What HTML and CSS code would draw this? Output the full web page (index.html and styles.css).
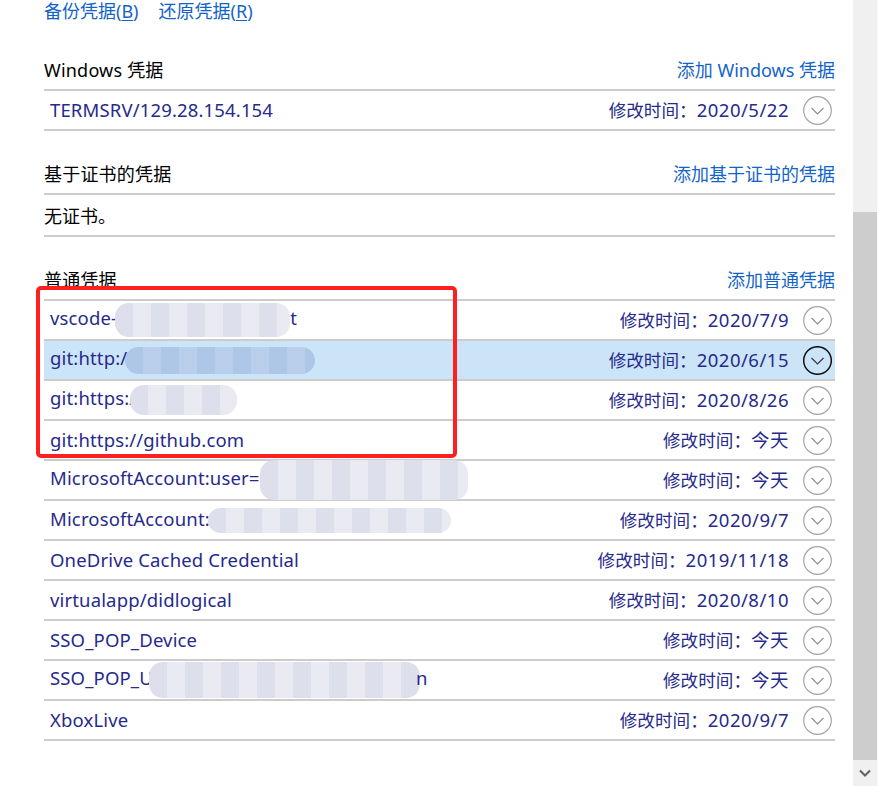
FILE: index.html
```html
<!DOCTYPE html>
<html lang="zh-CN">
<head>
<meta charset="utf-8">
<title>凭据管理器</title>
<link rel="stylesheet" href="styles.css">
</head>
<body>
<div class="window">
  <main class="content">
    <div class="toplinks">
      <a class="link">备份凭据(<u>B</u>)</a>
      <a class="link">还原凭据(<u>R</u>)</a>
    </div>

    <section class="group first">
      <div class="group-head"><span class="title">Windows 凭据</span><a class="link">添加 Windows 凭据</a></div>
      <ul class="list">
        <li class="row"><span class="name">TERMSRV/129.28.154.154</span><span class="time"><span class="label">修改时间：</span><span class="date">2020/5/22</span></span><span class="expand"><svg viewBox="0 0 29 29" width="29" height="29"><circle cx="14.5" cy="14.5" r="13.8"/><polyline points="8.5,12 14.5,18 20.5,12"/></svg></span></li>
      </ul>
    </section>

    <section class="group">
      <div class="group-head"><span class="title">基于证书的凭据</span><a class="link">添加基于证书的凭据</a></div>
      <ul class="list">
        <li class="row empty"><span class="plain">无证书。</span></li>
      </ul>
    </section>

    <section class="group">
      <div class="group-head"><span class="title">普通凭据</span><a class="link">添加普通凭据</a></div>
      <ul class="list">
        <li class="row"><span class="name">vscode-<span class="blur b1"></span>t</span><span class="time"><span class="label">修改时间：</span><span class="date">2020/7/9</span></span><span class="expand"><svg viewBox="0 0 29 29" width="29" height="29"><circle cx="14.5" cy="14.5" r="13.8"/><polyline points="8.5,12 14.5,18 20.5,12"/></svg></span></li>
        <li class="row selected"><span class="name">git:http:/<span class="blur b2"></span></span><span class="time"><span class="label">修改时间：</span><span class="date">2020/6/15</span></span><span class="expand"><svg viewBox="0 0 29 29" width="29" height="29"><circle cx="14.5" cy="14.5" r="13.8"/><polyline points="8.5,12 14.5,18 20.5,12"/></svg></span></li>
        <li class="row"><span class="name">git:https:/<span class="blur b3"></span></span><span class="time"><span class="label">修改时间：</span><span class="date">2020/8/26</span></span><span class="expand"><svg viewBox="0 0 29 29" width="29" height="29"><circle cx="14.5" cy="14.5" r="13.8"/><polyline points="8.5,12 14.5,18 20.5,12"/></svg></span></li>
        <li class="row"><span class="name">git:https://github.com</span><span class="time"><span class="label">修改时间：</span><span class="date">今天</span></span><span class="expand"><svg viewBox="0 0 29 29" width="29" height="29"><circle cx="14.5" cy="14.5" r="13.8"/><polyline points="8.5,12 14.5,18 20.5,12"/></svg></span></li>
        <li class="row"><span class="name">MicrosoftAccount:user=<span class="blur b4"></span></span><span class="time"><span class="label">修改时间：</span><span class="date">今天</span></span><span class="expand"><svg viewBox="0 0 29 29" width="29" height="29"><circle cx="14.5" cy="14.5" r="13.8"/><polyline points="8.5,12 14.5,18 20.5,12"/></svg></span></li>
        <li class="row"><span class="name">MicrosoftAccount:<span class="blur b5"></span></span><span class="time"><span class="label">修改时间：</span><span class="date">2020/9/7</span></span><span class="expand"><svg viewBox="0 0 29 29" width="29" height="29"><circle cx="14.5" cy="14.5" r="13.8"/><polyline points="8.5,12 14.5,18 20.5,12"/></svg></span></li>
        <li class="row"><span class="name">OneDrive Cached Credential</span><span class="time"><span class="label">修改时间：</span><span class="date">2019/11/18</span></span><span class="expand"><svg viewBox="0 0 29 29" width="29" height="29"><circle cx="14.5" cy="14.5" r="13.8"/><polyline points="8.5,12 14.5,18 20.5,12"/></svg></span></li>
        <li class="row"><span class="name">virtualapp/didlogical</span><span class="time"><span class="label">修改时间：</span><span class="date">2020/8/10</span></span><span class="expand"><svg viewBox="0 0 29 29" width="29" height="29"><circle cx="14.5" cy="14.5" r="13.8"/><polyline points="8.5,12 14.5,18 20.5,12"/></svg></span></li>
        <li class="row"><span class="name">SSO_POP_Device</span><span class="time"><span class="label">修改时间：</span><span class="date">今天</span></span><span class="expand"><svg viewBox="0 0 29 29" width="29" height="29"><circle cx="14.5" cy="14.5" r="13.8"/><polyline points="8.5,12 14.5,18 20.5,12"/></svg></span></li>
        <li class="row"><span class="name">SSO_POP_U<span class="blur b6"></span>n</span><span class="time"><span class="label">修改时间：</span><span class="date">今天</span></span><span class="expand"><svg viewBox="0 0 29 29" width="29" height="29"><circle cx="14.5" cy="14.5" r="13.8"/><polyline points="8.5,12 14.5,18 20.5,12"/></svg></span></li>
        <li class="row"><span class="name">XboxLive</span><span class="time"><span class="label">修改时间：</span><span class="date">2020/9/7</span></span><span class="expand"><svg viewBox="0 0 29 29" width="29" height="29"><circle cx="14.5" cy="14.5" r="13.8"/><polyline points="8.5,12 14.5,18 20.5,12"/></svg></span></li>
      </ul>
    </section>

    <div class="mark"></div>
  </main>

  <div class="scrollbar">
    <div class="track"></div>
    <div class="thumb"></div>
    <div class="arrow-down"><svg viewBox="0 0 12 8" width="12" height="8"><polyline points="1,1.5 6,6.5 11,1.5"/></svg></div>
  </div>
</div>
</body>
</html>
```

FILE: styles.css
```css
* { box-sizing: border-box; }

body {
  margin: 0;
  background: #ffffff;
  font-family: "Noto Sans", "Noto Sans CJK SC", sans-serif;
  font-size: 18px;
  color: #000;
}

.window {
  display: flex;
  height: 786px;
  overflow: hidden;
}

.content {
  position: relative;
  flex: 1;
  padding: 0 18px 0 44px;
}

.link {
  color: #1464c8;
  text-decoration: none;
  white-space: nowrap;
}

.link u {
  text-decoration: underline;
  text-underline-offset: 2px;
}

.toplinks {
  display: flex;
  gap: 20px;
  height: 22px;
  line-height: 22px;
}

.group {
  margin-top: 31px;
}

.group.first {
  margin-top: 36px;
}

.title {
  letter-spacing: 0.2px;
}

.group-head {
  display: flex;
  justify-content: space-between;
  align-items: center;
  height: 24px;
  line-height: 24px;
  margin-bottom: 7px;
}

.list {
  list-style: none;
  margin: 0;
  padding: 0;
  border-top: 2px solid #cccccc;
}

.row {
  display: flex;
  align-items: center;
  height: 40px;
  border-bottom: 2px solid #cccccc;
  padding: 0 3px 0 6px;
  color: #262a8c;
}

.row.empty {
  height: 42px;
  padding-left: 0;
  color: #000;
}

.row.selected {
  background: #cce4f7;
}

.name {
  flex: 1;
  white-space: nowrap;
  line-height: 24px;
  font-size: 18.5px;
  letter-spacing: 0.15px;
}

.time {
  white-space: nowrap;
  line-height: 24px;
}

.label {
  font-size: 17.6px;
}

.date {
  font-size: 18.5px;
  letter-spacing: 0.5px;
}

.expand {
  display: flex;
  margin-left: 14px;
}

.expand svg {
  fill: none;
}

.expand circle {
  stroke: #a3a3a3;
  stroke-width: 1.2;
}

.expand polyline {
  stroke: #8c8c8c;
  stroke-width: 1.1;
}

.selected .expand circle {
  stroke: #111;
  stroke-width: 1.5;
}

.selected .expand polyline {
  stroke: #333;
}

.blur {
  display: inline-block;
  vertical-align: middle;
  border-radius: 14px;
  background:
    repeating-linear-gradient(90deg, rgba(218,220,234,0.7) 0 18px, rgba(236,236,243,0.6) 18px 36px),
    #e5e6f0;
}

.b1 { width: 175px; height: 34px; margin-left: -2px; }
.b2 {
  width: 190px; height: 27px; margin-left: -2px;
  background:
    repeating-linear-gradient(90deg, rgba(170,196,230,0.7) 0 18px, rgba(186,207,236,0.7) 18px 36px),
    #b6cdea;
}
.b3 { width: 107px; height: 30px; margin-left: -6px; }
.b4 { width: 208px; height: 40px; margin-left: 0; }
.b5 { width: 243px; height: 25px; margin-left: -2px; }
.b6 { width: 271px; height: 36px; margin-left: -4px; margin-right: -4px; }

.mark {
  position: absolute;
  left: 36px;
  top: 286px;
  width: 421px;
  height: 172px;
  border: 4px solid #fe1f1f;
  border-radius: 5px;
}

.scrollbar {
  width: 25px;
  display: flex;
  flex-direction: column;
  background: #f0f0f0;
  border-right: 1px solid #fafafa;
}

.track {
  height: 212px;
}

.thumb {
  height: 548px;
  background: #cdcdcd;
}

.arrow-down {
  flex: 1;
  display: flex;
  align-items: center;
  justify-content: center;
}

.arrow-down svg {
  fill: none;
  stroke: #606060;
  stroke-width: 2;
}
```
